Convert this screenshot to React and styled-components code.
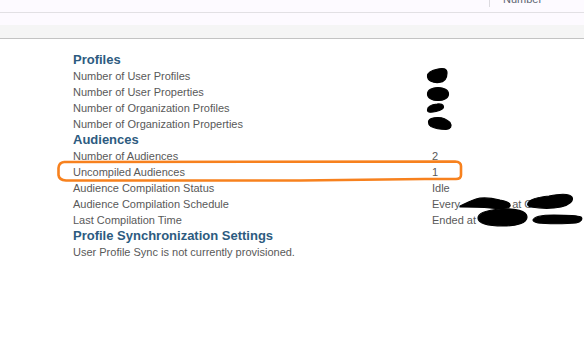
import React from 'react';
import styled, { createGlobalStyle } from 'styled-components';

const Global = createGlobalStyle`
  html, body { margin: 0; padding: 0; background: #fff; }
  body { font-family: "Liberation Sans", Arial, sans-serif; }
`;

const Page = styled.div`
  width: 584px;
  height: 341px;
  overflow: hidden;
  position: relative;
  background: #fff;
`;

const TopStrip = styled.div`
  height: 12px;
  background: #fdfaff;
  border-bottom: 1px solid #e2e0e4;
  display: flex;
  align-items: flex-start;
  padding-left: 489px;
  overflow: hidden;
`;

const TopDivider = styled.div`
  width: 1px;
  height: 7px;
  background: #dcdadf;
`;

const TopText = styled.span`
  margin-left: 13px;
  margin-top: -6px;
  font-size: 11px;
  line-height: 11px;
  color: #5c6470;
  white-space: nowrap;
`;

const Band = styled.div`
  height: ${(p) => p.$h}px;
  background: ${(p) => p.$bg};
  border-bottom: ${(p) => (p.$line ? `1px solid ${p.$line}` : 'none')};
`;

const Content = styled.div`
  padding: 13px 0 0 73px;
  position: relative;
`;

const Heading = styled.div`
  font-size: 13px;
  font-weight: bold;
  line-height: 16px;
  color: #2d5b80;
`;

const Row = styled.div`
  display: grid;
  grid-template-columns: 359px 1fr;
  font-size: 11px;
  line-height: 16px;
  height: 16px;
  color: #595959;
  white-space: nowrap;
`;

const Value = styled.div`
  position: relative;
  display: flex;
`;

const Gap = styled.span`
  display: inline-block;
  width: ${(p) => p.$w}px;
`;

const Note = styled.div`
  font-size: 11px;
  line-height: 16px;
  color: #595959;
`;

const Mark = styled.svg`
  position: absolute;
  left: ${(p) => p.$x}px;
  top: ${(p) => p.$y}px;
  overflow: visible;
`;

const Highlight = styled.svg`
  position: absolute;
  left: 0;
  top: -39px;
  pointer-events: none;
`;

const Blob = ({ x, y, w, h, d }) => (
  <Mark $x={x} $y={y} width={w} height={h} viewBox={`0 0 ${w} ${h}`}>
    <path d={d} fill="#000" stroke="#000" strokeWidth="1.2" strokeLinejoin="round" />
  </Mark>
);

export default function App() {
  return (
    <Page>
      <Global />
      <TopStrip>
        <TopDivider />
        <TopText>Number</TopText>
      </TopStrip>
      <Band $h={12} $bg="#fdfaff" />
      <Band $h={13} $bg="#f5f5f5" $line="#c3c3c3" />
      <Content>
        <Heading>Profiles</Heading>
        <Row>
          <span>Number of User Profiles</span>
          <Value>
            <Blob x={-5} y={0} w={21} h={15} d="M0.5 8 C0.5 4 6 2 11 1 C16 0 20 0.5 20 5 C20 10 17.5 14 12 14.5 C6 15 0.5 13 0.5 8 Z" />
          </Value>
        </Row>
        <Row>
          <span>Number of User Properties</span>
          <Value>
            <Blob x={-5} y={3} w={22} h={14} d="M0.5 7 C0.5 3 5 0.5 11 0.5 C17 0.5 21.5 3 21.5 7 C21.5 11 17 13.5 11 13.5 C5 13.5 0.5 11 0.5 7 Z" />
          </Value>
        </Row>
        <Row>
          <span>Number of Organization Profiles</span>
          <Value>
            <Blob x={-5} y={3} w={17} h={10} d="M0.5 7 C0.5 3.5 5 1.5 10 1 C14 0.5 16.5 1.5 16.5 4 C16.5 6.5 13 7.5 9 8.5 C5 9.5 0.5 10 0.5 7 Z" />
          </Value>
        </Row>
        <Row>
          <span>Number of Organization Properties</span>
          <Value>
            <Blob x={-4} y={1} w={24} h={13} d="M0.5 5 C0.5 1.5 5 0.5 10 0.5 C15 0.5 19 2.5 22 5.5 C24.5 9 22.5 12.5 18 12.5 C12 12.5 7 11.5 3 9.5 C0.5 8 0.5 7 0.5 5 Z" />
          </Value>
        </Row>
        <Heading>Audiences</Heading>
        <Row>
          <span>Number of Audiences</span>
          <span>2</span>
        </Row>
        <Row>
          <span>Uncompiled Audiences</span>
          <span>1</span>
        </Row>
        <Row>
          <span>Audience Compilation Status</span>
          <span>Idle</span>
        </Row>
        <Row>
          <span>Audience Compilation Schedule</span>
          <Value>
            <span>Every</span>
            <Gap $w={52} />
            <span>at C</span>
            <Blob x={28} y={1} w={51} h={13} d="M0 9 C6 6 10 4 16 2 C22 0 32 1 40 3 C46 4 51 6 50 9 C49 12 40 12 30 11 C20 10 10 10 0 10 Z" />
            <Blob x={95} y={-3} w={46} h={16} d="M1 10 C3 6 12 4 22 3 C32 1 42 0 45 4 C47 8 42 12 34 14 C24 16 10 15 4 14 C1 13 0 12 1 10 Z" />
          </Value>
        </Row>
        <Row>
          <span>Last Compilation Time</span>
          <Value>
            <span>Ended at</span>
            <Blob x={45} y={-4} w={51} h={19} d="M1 10 C1 5 10 2 24 1 C38 0 50 3 50 9 C50 15 40 18 26 18 C10 18 1 15 1 10 Z" />
            <Blob x={100} y={2} w={51} h={10} d="M1 6 C2 3 10 1 22 1 C34 1 44 1 49 3 C51 5 49 8 44 9 C34 10 14 10 6 9 C2 8 1 7 1 6 Z" />
          </Value>
        </Row>
        <Heading>Profile Synchronization Settings</Heading>
        <Note>User Profile Sync is not currently provisioned.</Note>
        <Highlight width="584" height="341" viewBox="0 0 584 341">
          <path
            d="M64 162 L455 161.5 Q461 162 461 166 L461 175 Q461 179 456 179 L425 179 L300 180.5 L66 180.5 Q59 180 58.5 175 L58.5 168 Q59 162.5 64 162"
            fill="none"
            stroke="#f7811e"
            strokeWidth="2.6"
            strokeLinejoin="round"
          />
        </Highlight>
      </Content>
    </Page>
  );
}
